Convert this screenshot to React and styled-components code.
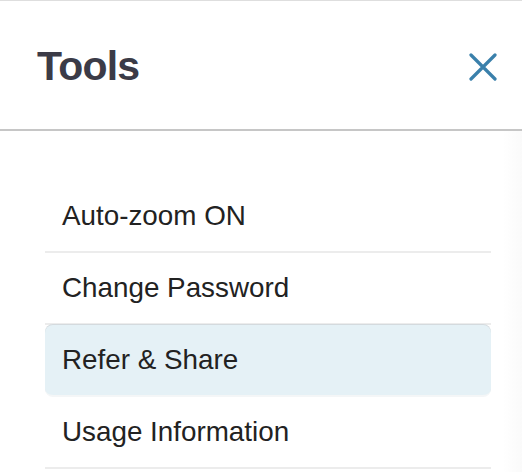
import React from "react";
import styled, { createGlobalStyle } from "styled-components";

const GlobalStyle = createGlobalStyle`
  html, body {
    margin: 0;
    padding: 0;
    background: #ffffff;
  }
  body {
    font-family: "Liberation Sans", Arial, Helvetica, sans-serif;
    -webkit-font-smoothing: antialiased;
  }
`;

const Panel = styled.div`
  width: 522px;
  height: 472px;
  overflow: hidden;
  border-top: 1px solid #dedede;
  box-sizing: border-box;
  background: linear-gradient(to left, rgba(0, 0, 0, 0.018), rgba(0, 0, 0, 0) 20px), #fff;
`;

const Header = styled.div`
  height: 128px;
  display: flex;
  align-items: center;
  justify-content: space-between;
  padding: 0 25px 0 37px;
  border-bottom: 2px solid #c6c6c6;
  background: #fff;
`;

const Title = styled.h1`
  margin: 0;
  font-size: 41px;
  font-weight: 700;
  letter-spacing: -0.8px;
  color: #3b3b47;
  line-height: 1;
  padding-top: 3px;
`;

const CloseButton = styled.button`
  border: 0;
  background: none;
  padding: 0;
  width: 28px;
  height: 28px;
  display: flex;
  cursor: pointer;
  margin-top: 3px;
`;

const List = styled.ul`
  list-style: none;
  margin: 0 31px 0 45px;
  padding: 50px 0 0;
`;

const Item = styled.li`
  height: 70px;
  display: flex;
  align-items: center;
  padding-left: 17px;
  font-size: 27.8px;
  color: #222222;
  border-bottom: 2px solid ${(p) => (p.$active ? "#f4f6f7" : "#ececec")};
  background: ${(p) => (p.$active ? "#e5f1f6" : "transparent")};
  border-radius: ${(p) => (p.$active ? "8px" : "0")};
  box-shadow: ${(p) => (p.$active ? "0 -1px 0 #d4dade" : "none")};
`;

const items = ["Auto-zoom ON", "Change Password", "Refer & Share", "Usage Information"];

export default function App() {
  return (
    <>
      <GlobalStyle />
      <Panel>
        <Header>
          <Title>Tools</Title>
          <CloseButton aria-label="Close">
            <svg width="28" height="28" viewBox="0 0 28 28">
              <path
                d="M2 2 L26 26 M26 2 L2 26"
                stroke="#3a80ab"
                strokeWidth="3.2"
                strokeLinecap="round"
              />
            </svg>
          </CloseButton>
        </Header>
        <List>
          {items.map((label) => (
            <Item key={label} $active={label === "Refer & Share"}>
              {label}
            </Item>
          ))}
        </List>
      </Panel>
    </>
  );
}
